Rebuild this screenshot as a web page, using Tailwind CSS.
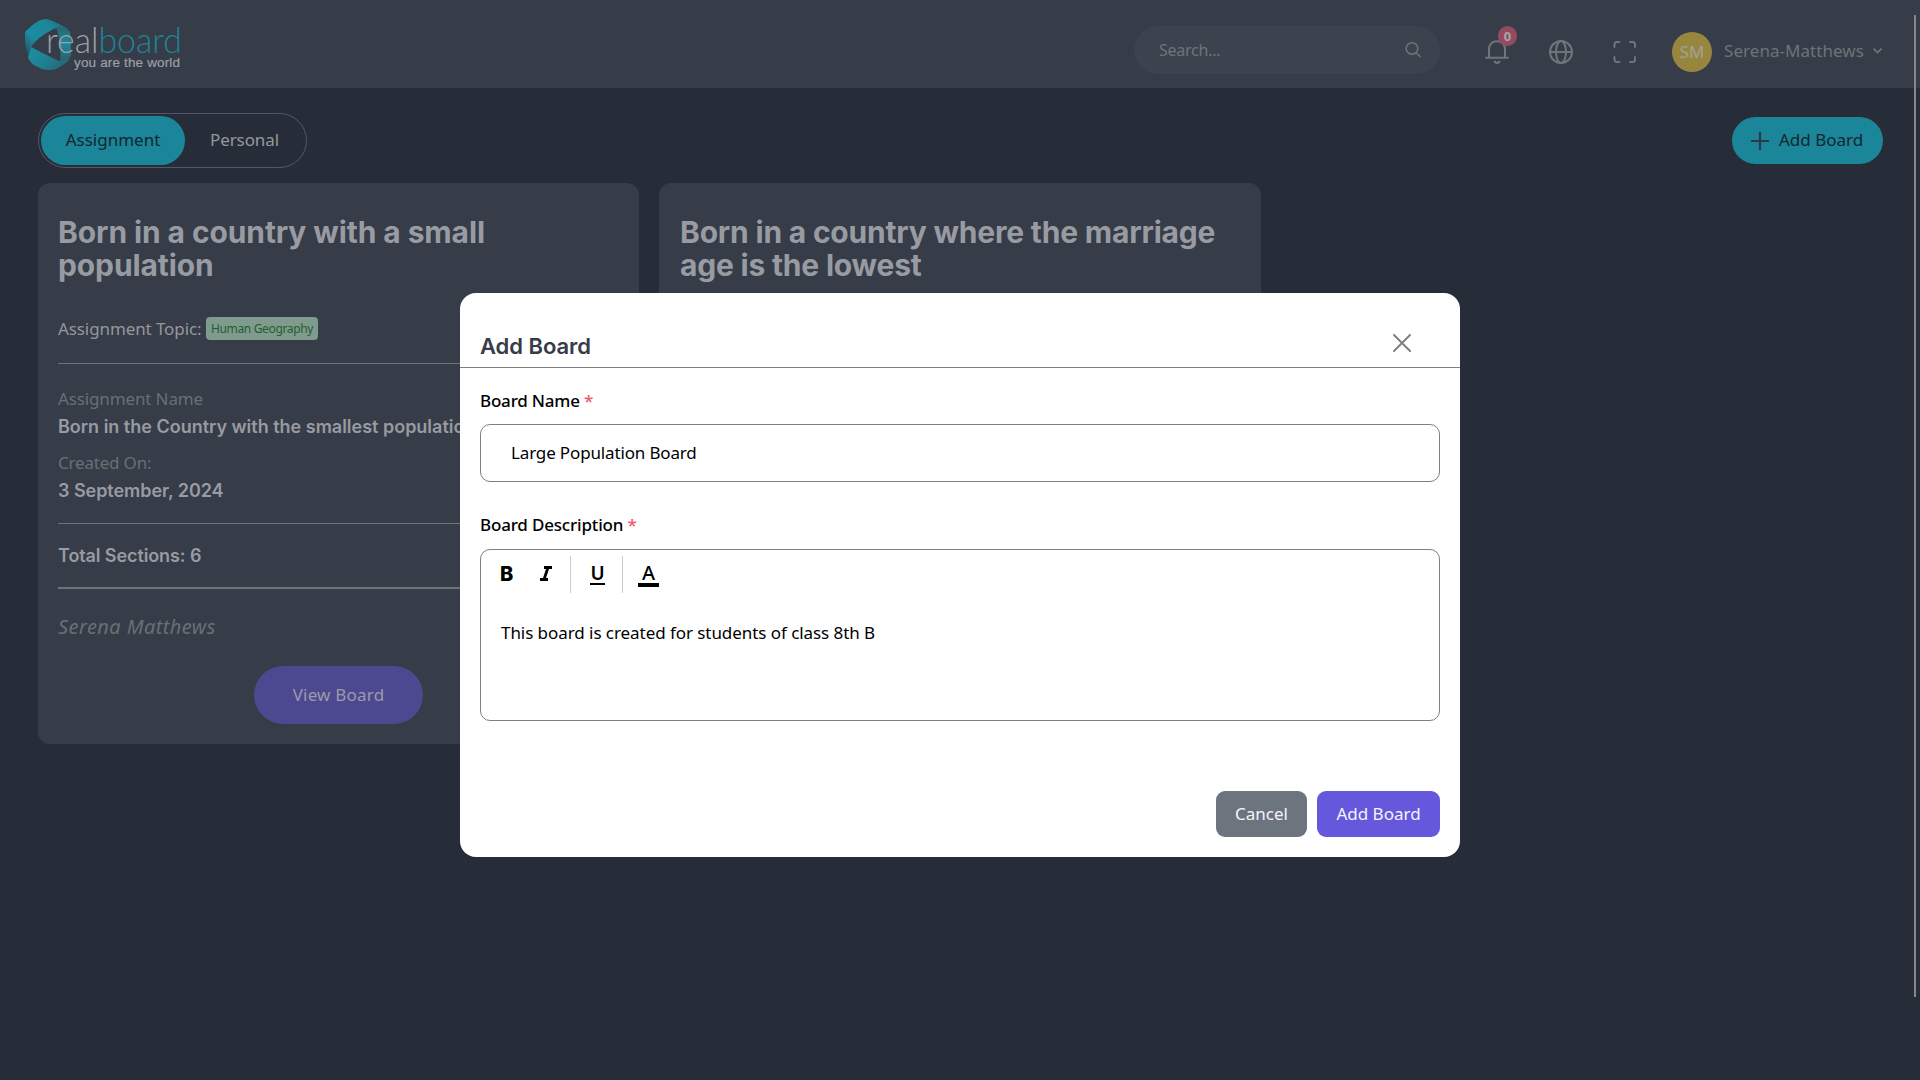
<!DOCTYPE html>
<html lang="en">
<head>
<meta charset="utf-8">
<title>Realboard</title>
<script src="https://cdn.jsdelivr.net/npm/@tailwindcss/browser@4"></script>
</head>
<body class="relative h-[1080px] w-[1920px] overflow-hidden bg-[#272d38] font-['Noto_Sans',sans-serif] text-[17px] leading-6 text-[#94979c]">

<header class="flex h-[88px] items-start bg-[#363c48] pr-[37px] pl-5">
  <svg class="mt-4 h-14 w-[165px]" viewBox="20 16 165 56">
    <defs>
      <linearGradient id="g1" x1="0" y1="1" x2="1" y2="0"><stop offset="0" stop-color="#2c4553"/><stop offset=".35" stop-color="#1c8ca0"/><stop offset=".7" stop-color="#1d879a"/><stop offset="1" stop-color="#29606f"/></linearGradient>
      <linearGradient id="g2" x1="0" y1="0" x2="0" y2="1"><stop offset="0" stop-color="#276574"/><stop offset=".5" stop-color="#1c8a9e"/><stop offset="1" stop-color="#275f6d"/></linearGradient>
      <linearGradient id="g3" x1="0" y1="0" x2="1" y2=".4"><stop offset="0" stop-color="#1b8fa3"/><stop offset=".5" stop-color="#1f8294"/><stop offset="1" stop-color="#276a79"/></linearGradient>
    </defs>
    <path d="M25 32Q37 19 46 19Q51 19 68 29Q58 25 50 31Q38 37 31 47L28 56Q25 48 25 40Z" fill="url(#g1)"/>
    <path d="M56 27Q66 26 70 32Q71 36 71 55Q70 61 60 61Q62 42 56 27Z" fill="url(#g2)"/>
    <path d="M31 47Q44 54 59 61L70 59Q67 63 56 69Q50 71 42 69Q29 64 28 57Z" fill="url(#g3)"/>
    <text x="46" y="53" font-family="Lato, sans-serif" font-weight="300" font-size="34.5" textLength="136" lengthAdjust="spacingAndGlyphs" fill="#9c9fa5">real<tspan fill="#1d8496">board</tspan></text>
    <text x="74" y="66.500" font-family="Liberation Sans, sans-serif" font-size="13.500" textLength="106" fill="#9c9fa5" stroke="#9c9fa5" stroke-width=".2">you are the world</text>
  </svg>
  <div class="mt-[26px] ml-auto flex h-12 w-[306px] items-center justify-between rounded-full bg-[#3c434e] pr-[19px] pl-[25px] text-base tracking-[-0.25px] text-[#6a7578]">
    <span class="-mt-px">Search...</span>
    <svg class="h-4 w-4" viewBox="0 0 16 16" fill="none" stroke="#6e797b" stroke-width="1.400"><circle cx="7" cy="6.500" r="5.800"/><path d="M11.200 10.700L15.500 15"/></svg>
  </div>
  <div class="relative mt-10 ml-[45px] h-6 w-6">
    <svg class="h-6 w-6" viewBox="0 0 24 24" fill="none" stroke="#6b7779" stroke-width="2" stroke-linecap="round"><path d="M1 17.800H23M4 17.500V9C4 4.500 7.200 1.300 12 1.300S20 4.500 20 9v8.500"/><path d="M9.500 21.500Q12 24.500 14.500 21.500"/></svg>
    <span class="absolute -top-3.5 left-[13px] flex h-5 w-[19px] items-center justify-center rounded-full bg-[#954b5f] text-[13px] font-bold text-[#a6a3aa]">0</span>
  </div>
  <svg class="mt-10 ml-10 h-6 w-6" viewBox="0 0 24 24" fill="none" stroke="#6b7779" stroke-width="2"><circle cx="12" cy="12" r="11"/><ellipse cx="12" cy="12" rx="5" ry="11"/><path d="M1 12H23"/></svg>
  <svg class="mt-10 ml-10 h-6 w-6" viewBox="0 0 24 24" fill="none" stroke="#6b7779" stroke-width="2" stroke-linecap="round"><path d="M1.500 7V4.500Q1.500 2 4 2H6.500M17 2H19.500Q22 2 22 4.500V7M22 17V19.500Q22 22 19.500 22H17M6.500 22H4Q1.500 22 1.500 19.500V17"/></svg>
  <div class="mt-8 ml-[35px] flex items-center">
    <span class="flex h-10 w-10 items-center justify-center rounded-full bg-[#97873e] text-[17px] tracking-[0.2px] text-[#a3a19a]">SM</span>
    <span class="-mt-0.5 ml-3 w-[149px] tracking-[0.05px] whitespace-nowrap text-[#6a7578]">Serena-Matthews</span>
    <svg class="-mt-1 mr-px h-[9px] w-[9px]" viewBox="0 0 9 9" fill="none" stroke="#6e797b" stroke-width="1.600"><path d="M0.500 2.500L4.500 6.500L8.500 2.500"/></svg>
  </div>
</header>

<main class="pr-[37px] pl-[38px]">
  <div class="flex items-start justify-between pt-[25px]">
    <nav class="flex h-[55px] w-[269px] items-center rounded-full border border-[#535862] pl-0.5">
      <span class="flex h-[49px] w-36 items-center justify-center rounded-full bg-[#1b8599] pb-0.5 text-[#142630]">Assignment</span>
      <span class="ml-[25px] pb-0.5 tracking-[-0.1px]">Personal</span>
    </nav>
    <button class="mt-1 flex h-[47px] w-[151px] items-center rounded-full bg-[#1b8599] pl-[19px] text-[#142630]">
      <svg class="mr-2.5 h-[18px] w-[18px]" viewBox="0 0 18 18" stroke="#303844" stroke-width="2.200"><path d="M9 0V18M0 9H18"/></svg>
      <span class="pb-0.5">Add Board</span>
    </button>
  </div>

  <div class="mt-[15px] flex gap-5">
    <article class="h-[561px] w-[601px] rounded-xl bg-[#363c48] px-5 pt-[33px]">
      <h2 class="h-[66px] w-[480px] font-['Inter',sans-serif] text-[30px] leading-[33px] font-bold tracking-[-0.1px] text-[#989ba1]">Born in a country with a small population</h2>
      <div class="mt-[35px] flex h-[23px] items-center">
        <span class="w-[148px] tracking-[-0.1px] whitespace-nowrap">Assignment Topic:</span>
        <span class="flex h-[23px] w-28 items-center justify-center rounded bg-[#7f9b8e] text-xs tracking-[-0.35px] whitespace-nowrap text-[#1f5e30]">Human Geography</span>
      </div>
      <div class="mt-[23px] h-px bg-[#6a7779]"></div>
      <p class="mt-[23px] tracking-[-0.13px] text-[#667173]">Assignment Name</p>
      <p class="mt-1 font-['Inter',sans-serif] text-lg leading-6 font-semibold tracking-[-0.01px] whitespace-nowrap text-[#989ba1]">Born in the Country with the smallest population</p>
      <p class="mt-3 tracking-[-0.2px] text-[#667173]">Created On:</p>
      <p class="mt-1 font-['Inter',sans-serif] text-lg leading-6 font-semibold tracking-[-0.05px] text-[#989ba1]">3 September, 2024</p>
      <div class="mt-5 h-px bg-[#6a7779]"></div>
      <p class="mt-5 font-['Inter',sans-serif] text-lg leading-6 font-semibold tracking-[-0.1px] text-[#989ba1]">Total Sections: 6</p>
      <div class="mt-[19px] h-0.5 bg-[#6a7779]"></div>
      <p class="mt-6 text-[20px] leading-7 tracking-[0.42px] text-[#667173] italic">Serena Matthews</p>
      <button class="mx-auto mt-[25px] flex h-[58px] w-[169px] items-center justify-center rounded-full bg-[#4d4990] tracking-[0.2px] text-[#9a9bac]">View Board</button>
    </article>
    <article class="h-[561px] w-[602px] rounded-xl bg-[#363c48] px-5 pt-[33px]">
      <h2 class="h-[66px] pl-px font-['Inter',sans-serif] text-[30px] leading-[33px] font-bold tracking-[-0.2px] text-[#989ba1]">Born in a country where the marriage<br>age is the lowest</h2>
    </article>
  </div>
</main>

<!-- page scroll indicator -->
<div class="absolute top-[15px] right-1 h-[982px] w-0.5 bg-[#888888]"></div>

<!-- Add Board dialog -->
<div class="absolute inset-0 flex items-start justify-center pt-[293px]">
  <section class="h-[564px] w-[1000px] rounded-2xl bg-white text-black">
    <div class="flex h-[75px] items-start justify-between border-b border-[#808080] pr-[49px] pl-5">
      <h3 class="mt-[39px] font-['Inter',sans-serif] text-[22px] leading-7 font-semibold tracking-[-0.05px] text-[#363c48]">Add Board</h3>
      <svg class="mt-[41px] h-[18px] w-[18px]" viewBox="0 0 18 18" fill="none" stroke="#808080" stroke-width="2" stroke-linecap="round"><path d="M1 1L17 17M17 1L1 17"/></svg>
    </div>
    <div class="px-5 pt-[21px]">
      <p class="font-medium tracking-[-0.2px]">Board Name <span class="text-[#f0556f]">*</span></p>
      <div class="mt-[11px] flex h-[58px] items-center rounded-[10px] border border-[#808080] pl-[30px]"><span class="tracking-[-0.15px]">Large Population Board</span></div>
      <p class="mt-[31px] font-medium tracking-[-0.18px]">Board Description <span class="text-[#f0556f]">*</span></p>
      <div class="mt-3 h-[172px] rounded-[10px] border border-[#808080] px-5 pt-1.5">
        <div class="flex h-[37px] items-start">
          <span class="-ml-px w-10 font-['Inter',sans-serif] text-xl leading-[36px] font-extrabold">B</span>
          <svg class="mt-2.5 h-[15px] w-3" viewBox="0 0 12 15" fill="none" stroke="#000" stroke-width="2.800"><path d="M4 1.500H12M0 13.500H8M8 1.500L4 13.500"/></svg>
          <span class="ml-[18px] h-[37px] w-px bg-[#cccccc]"></span>
          <span class="mt-2 ml-[19px] flex h-[21px] w-[15px] justify-center border-b-2 border-black text-[19px] leading-[18px] font-semibold">U</span>
          <span class="ml-[17px] h-[37px] w-px bg-[#cccccc]"></span>
          <span class="mt-[9px] ml-[15px] flex h-[22px] w-[21px] justify-center border-b-4 border-black text-[20px] leading-[16px] font-medium">A</span>
        </div>
        <p class="mt-7 tracking-[-0.06px]">This board is created for students of class 8th B</p>
      </div>
      <div class="mt-[70px] flex justify-end gap-2.5 text-[#f4f4fa]">
        <button class="h-[46px] w-[91px] rounded-[9px] bg-[#6c757d]">Cancel</button>
        <button class="h-[46px] w-[123px] rounded-[9px] bg-[#6658dd]">Add Board</button>
      </div>
    </div>
  </section>
</div>
</body>
</html>
